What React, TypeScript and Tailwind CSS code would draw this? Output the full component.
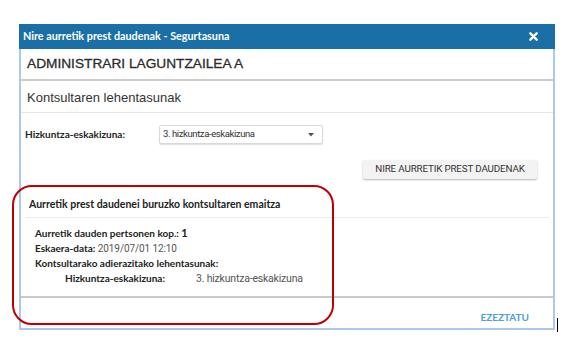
const labelFont = "font-['Lato','Liberation_Sans',sans-serif]";
const valueFont = "font-['Roboto','Liberation_Sans',sans-serif]";

export default function App() {
  return (
    <div className="relative w-[567px] h-[346px] bg-white overflow-hidden">
      <div className="ml-[19px] pt-[24px]">
        <div className="w-[536px] h-[306px] border-x-2 border-b-2 border-[#abc9ec] flex flex-col">
          {/* title bar */}
          <div className="h-[25px] -mx-[2px] bg-[#1a70a6] flex items-center justify-between pl-[4px] pr-[17px]">
            <span className={`${labelFont} text-[10.8px] font-bold text-white`}>
              Nire aurretik prest daudenak - Segurtasuna
            </span>
            <svg width="9" height="9" viewBox="0 0 10 10">
              <path d="M1.5 1.5 L8.5 8.5 M8.5 1.5 L1.5 8.5" stroke="white" strokeWidth="2.6" strokeLinecap="round" />
            </svg>
          </div>

          {/* header */}
          <div className="h-[32px] flex items-center px-[6px] border-b-2 border-[#cccccc]">
            <span className="font-['Liberation_Sans',sans-serif] text-[13.7px] text-[#2b2b2b] [-webkit-text-stroke:0.3px_#2b2b2b]">
              ADMINISTRARI LAGUNTZAILEA A
            </span>
          </div>

          {/* section title */}
          <div className="h-[32px] flex items-center pt-[3px] px-[6px] border-b border-[#e6e6e6]">
            <span className="font-['Liberation_Sans',sans-serif] text-[13px] text-[#333]">
              Kontsultaren lehentasunak
            </span>
          </div>

          {/* form */}
          <div className="flex items-center mt-[12px] pl-[4px]">
            <span className={`${labelFont} w-[134px] text-[10px] font-bold text-[#222]`}>Hizkuntza-eskakizuna:</span>
            <div className="w-[164px] h-[19px] rounded-[2px] border border-[#d9d9d9] shadow-[0_1px_1px_rgba(0,0,0,0.12)] flex items-center justify-between pl-[3px] pr-[8px]">
              <span className={`${valueFont} text-[9.5px] tracking-[-0.4px] text-[#333]`}>3. hizkuntza-eskakizuna</span>
              <svg width="6" height="4" viewBox="0 0 6 4">
                <path d="M0 0 L6 0 L3 3.5 Z" fill="#555" />
              </svg>
            </div>
          </div>

          <div className="flex justify-end mt-[16px] pr-[16px]">
            <button className={`${valueFont} h-[19px] w-[174px] rounded-[2px] bg-[#f3f3f3] shadow-[0_1px_2px_rgba(0,0,0,0.3)] text-[9.8px] text-[#333] tracking-[-0.15px]`}>
              NIRE AURRETIK PREST DAUDENAK
            </button>
          </div>

          {/* results */}
          <div className={`${labelFont} mx-[4px] pt-[18px] pb-[6px] pl-[4px] border-b border-[#ececec] text-[10.5px] leading-[14px] font-bold text-[#222]`}>
            Aurretik prest daudenei buruzko kontsultaren emaitza
          </div>
          <div className={`pt-[7px] pl-[14px] text-[10px] leading-[15px] text-[#222] ${labelFont}`}>
            <div>
              <span className="font-bold">Aurretik dauden pertsonen kop.: </span>
              <span className="font-bold text-[11px]">1</span>
            </div>
            <div>
              <span className="font-bold">Eskaera-data: </span>
              <span className={`${valueFont} text-[10px] tracking-[-0.1px] text-[#555]`}>2019/07/01 12:10</span>
            </div>
            <div className="font-bold">Kontsultarako adierazitako lehentasunak:</div>
            <div className="flex pl-[30px]">
              <span className="font-bold w-[131px]">Hizkuntza-eskakizuna:</span>
              <span className={`${valueFont} text-[10.5px] tracking-[-0.2px] text-[#555]`}>3. hizkuntza-eskakizuna</span>
            </div>
          </div>

          <div className="mt-[10px] border-t-2 border-[#c9c9c9]" />
          <div className="flex-1 flex items-end justify-end pb-[5px] pr-[24px]">
            <span className={`${labelFont} text-[10px] leading-[12px] font-bold text-[#4da0d2]`}>EZEZTATU</span>
          </div>
        </div>
      </div>

      {/* annotation */}
      <div className="absolute left-[12px] top-[185px] w-[322px] h-[140px] rounded-[20px] border-[2.5px] border-[#c00000]" />
      <div className="absolute left-[557px] top-[318px] w-px h-[14px] bg-black" />
    </div>
  );
}
